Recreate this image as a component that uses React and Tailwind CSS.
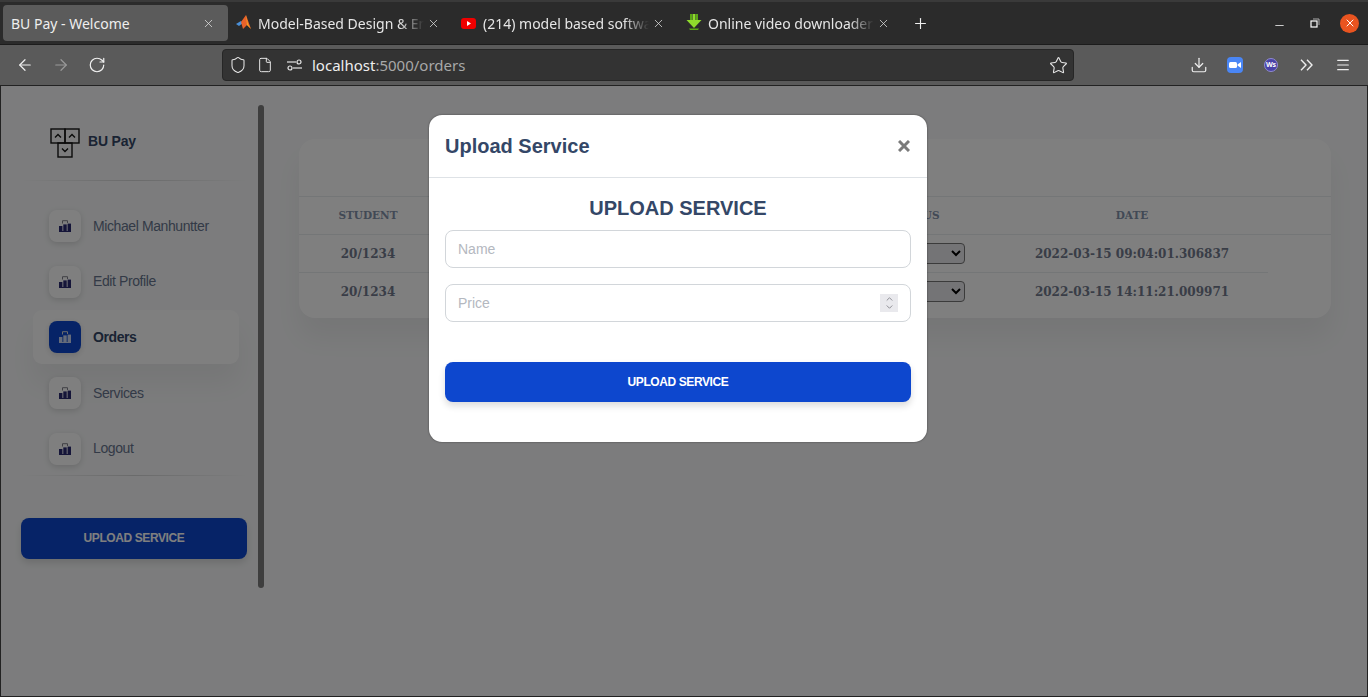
import React from "react";
import { ArrowLeft, ArrowRight, RotateCw, Shield, File, Star, Download, Menu, X, Plus, Minus, ChevronUp, ChevronDown } from "lucide-react";

const MatlabIcon = () => (
  <svg width="16" height="16" viewBox="0 0 16 16" className="shrink-0">
    <path d="M0 9 L5 6 L7 8 L3 11 Z" fill="#4a90d9" />
    <path d="M5 7 L10 0 L15 14 L11 10 L7 14 Z" fill="#e8622a" />
    <path d="M10 0 L12 9 L15 14 L11 10 Z" fill="#f5a623" />
  </svg>
);
const YouTubeIcon = () => (
  <svg width="15" height="15" viewBox="0 0 15 15" className="shrink-0">
    <rect x="0" y="2" width="15" height="11" rx="3" fill="#f00000" />
    <path d="M6 5 L10 7.5 L6 10 Z" fill="#fff" />
  </svg>
);
const ArrowFav = () => (
  <svg width="16" height="18" viewBox="0 0 16 18" className="shrink-0 -mt-[3px]">
    <path d="M4 1 H6 V7 H4 Z M10 1 H12 V7 H10 Z" fill="#5aa815" />
    <path d="M6.5 1 H9.5 V7 H6.5 Z" fill="#8fdc2c" />
    <path d="M0.5 7 H15.5 L8 15 Z" fill="#8fdc2c" />
    <path d="M3 15.5 H13 L12 17 H4 Z" fill="#5aa815" />
  </svg>
);

const Tab = ({ icon, label, active, fade }) => (
  <div className={`w-[225px] h-[36px] shrink-0 flex items-center rounded-[4px] pl-[8px] pr-[13px] ${active ? "bg-[#5b5b5b]" : ""}`}>
    {icon && <span className="w-[22px] shrink-0 flex items-center">{icon}</span>}
    <span className={`flex-1 overflow-hidden whitespace-nowrap text-[14px] pt-[1px] ${active ? "text-[#eeeeee]" : "text-[#e6e6e6]"} ${fade ? "[mask-image:linear-gradient(to_right,black_85%,transparent)]" : ""}`}>
      {label}
    </span>
    <X size={13} strokeWidth={1.4} className="shrink-0 ml-[3px] text-[#e0e0e0]" />
  </div>
);

const SlidersIcon = () => (
  <svg width="15" height="12" viewBox="0 0 15 12" fill="none" stroke="#e6e6e6" strokeWidth="1.2">
    <path d="M0 3 H9" />
    <circle cx="12" cy="3" r="2" />
    <circle cx="3" cy="9" r="2" />
    <path d="M6 9 H15" />
  </svg>
);

const Logo = () => (
  <svg width="30" height="30" viewBox="0 0 30 30" fill="none" stroke="#141414" strokeWidth="1.4" className="shrink-0">
    <rect x="1" y="1" width="14" height="14" />
    <rect x="15" y="1" width="14" height="14" />
    <rect x="8" y="15" width="14" height="14" />
    <path d="M5 9.5 L8 6.5 L11 9.5 M19 9.5 L22 6.5 L25 9.5 M12 20.5 L15 23.5 L18 20.5" />
  </svg>
);

const NavGlyph = ({ active }) => {
  const fill = active ? "#ffffff" : "#2a2a72";
  const op = active ? 0.78 : 1;
  return (
    <svg width="12" height="12" viewBox="0 0 12 12" fill="none">
      <path d="M3.5 3.5 V0.7 H8.5 V3" stroke={active ? "#d8d8d8" : "#80808c"} strokeWidth="1" />
      <g fill={fill} opacity={op}>
        <rect x="0" y="6" width="3.4" height="6" />
        <rect x="4.3" y="4.4" width="3.4" height="7.6" />
        <rect x="8.6" y="3.6" width="3.4" height="8.4" />
        <rect x="0" y="11" width="12" height="1" />
      </g>
    </svg>
  );
};

const NavItem = ({ label, active }) => (
  <div className={`h-[54px] flex items-center pl-[16px] rounded-[9px] ${active ? "bg-white shadow-[0_20px_27px_rgba(0,0,0,0.05)]" : ""}`}>
    <div className={`w-[32px] h-[32px] rounded-[8px] flex items-center justify-center shadow-[0_2px_6px_rgba(0,0,0,0.14)] ${active ? "bg-[#0d47ce]" : "bg-white"}`}>
      <NavGlyph active={active} />
    </div>
    <span className={`ml-[12px] text-[14px] tracking-[-0.4px] ${active ? "font-bold text-[#344767]" : "text-[#67748e]"}`}>{label}</span>
  </div>
);

const Divider = () => (
  <div className="h-px bg-[linear-gradient(to_right,transparent,rgba(0,0,0,0.14),transparent)]" />
);

const cols = "grid grid-cols-[138px_391px_168px_272px] items-center";

const Row = ({ date, line }) => (
  <div className="h-[38px] w-[969px]">
    <div className={`${cols} h-[37px] font-['DejaVu_Serif',serif] text-[12px] font-bold text-[#737b8e]`}>
      <div className="text-center">20/1234</div>
      <div />
      <div className="text-center">
        <select className="w-[106px] h-[21px] border border-[#767676] rounded-[4px] bg-[#e9e9ed] text-[13px] text-black align-middle">
          <option>Pending</option>
        </select>
      </div>
      <div className="text-center">{date}</div>
    </div>
    {line && <div className="h-px bg-[#e9ecef]" />}
  </div>
);

export default function App() {
  return (
    <div className="w-[1368px] h-[697px] flex flex-col overflow-hidden font-['Liberation_Sans',sans-serif]">
      {/* Tab strip */}
      <div className="h-[45px] shrink-0 bg-[#2b2b2b] border-t-2 border-t-[#3a3a3a] border-b border-b-[#1c1c1c] flex items-center pl-[3px] font-['Noto_Sans',sans-serif]">
        <Tab label="BU Pay - Welcome" active />
        <Tab icon={<MatlabIcon />} label="Model-Based Design & Engineering" fade />
        <Tab icon={<YouTubeIcon />} label="(214) model based software" fade />
        <Tab icon={<ArrowFav />} label="Online video downloader" fade />
        <Plus size={17} strokeWidth={1.6} className="ml-[9px] text-[#f0f0f0]" />
        <div className="flex-1" />
        <div className="flex items-center">
          <Minus size={13} strokeWidth={1.4} className="text-white mt-[4px]" />
          <svg width="10" height="10" viewBox="0 0 10 10" fill="none" className="ml-[24px]">
            <rect x="1" y="3" width="6" height="6" stroke="#fff" strokeWidth="1.2" />
            <path d="M3 1 H9 V7" stroke="#aaa" strokeWidth="1" />
          </svg>
          <div className="ml-[20px] mr-[9px] w-[19px] h-[19px] rounded-full bg-[#e95420] flex items-center justify-center">
            <X size={12} strokeWidth={2} className="text-white" />
          </div>
        </div>
      </div>

      {/* Toolbar */}
      <div className="h-[41px] shrink-0 bg-[#5a5a5a] border-b border-b-[#222222] flex items-center pl-[16px] pr-[17px] font-['Noto_Sans',sans-serif]">
        <ArrowLeft size={18} strokeWidth={1.6} className="text-[#f0f0f0]" />
        <ArrowRight size={18} strokeWidth={1.6} className="ml-[18px] text-[#9a9a9a]" />
        <RotateCw size={18} strokeWidth={1.6} className="ml-[18px] text-[#f0f0f0]" />
        <div className="ml-[116px] w-[852px] h-[32px] bg-[#333333] border border-[#262626] rounded-[4px] flex items-center pl-[6px] pr-[5px]">
          <Shield size={18} strokeWidth={1.4} className="text-[#e6e6e6]" />
          <File size={16} strokeWidth={1.5} className="ml-[10px] text-[#e6e6e6]" />
          <span className="ml-[14px] flex"><SlidersIcon /></span>
          <span className="ml-[10px] text-[15px] whitespace-nowrap text-[#eeeeee]">localhost<span className="text-[#a8a8a8]">:5000/orders</span></span>
          <div className="flex-1" />
          <Star size={19} strokeWidth={1.4} className="text-[#e6e6e6]" />
        </div>
        <div className="flex-1" />
        <Download size={18} strokeWidth={1.6} className="text-[#eeeeee]" />
        <div className="ml-[19px] w-[16px] h-[16px] rounded-[4px] bg-[#4a86f5] flex items-center justify-center">
          <svg width="12" height="8" viewBox="0 0 12 8"><rect x="0" y="1" width="8" height="6" rx="1.5" fill="#fff" /><path d="M8.5 3.5 L12 1 V7 L8.5 4.5 Z" fill="#fff" /></svg>
        </div>
        <div className="ml-[21px] w-[14px] h-[14px] rounded-full bg-[#4a42a8] border border-[#8f8bd0] flex items-center justify-center text-[7px] font-bold text-white">Ws</div>
        <svg width="13" height="12" viewBox="0 0 13 12" fill="none" stroke="#eeeeee" strokeWidth="1.4" className="ml-[22px]">
          <path d="M1 0.7 L6 6 L1 11.3 M7 0.7 L12 6 L7 11.3" />
        </svg>
        <Menu size={16} strokeWidth={1.7} className="ml-[22px] text-[#eeeeee]" />
      </div>

      {/* Page */}
      <div className="relative flex-1 flex items-start bg-[#f8f9fa] border-x border-b border-[#222222]">
        <aside className="ml-[20px] w-[226px] shrink-0 pt-[42px]">
          <div className="flex items-center ml-[29px] h-[29px]">
            <Logo />
            <span className="ml-[8px] pb-[2px] text-[14px] font-bold tracking-[-0.2px] text-[#344767]">BU Pay</span>
          </div>
          <div className="mt-[23px] mb-[18px]"><Divider /></div>
          <nav className="ml-[12px] w-[206px] flex flex-col gap-[1.7px]">
            <NavItem label="Michael Manhuntter" />
            <NavItem label="Edit Profile" />
            <NavItem label="Orders" active />
            <NavItem label="Services" />
            <NavItem label="Logout" />
          </nav>
          <div className="-mt-px mb-[42px]"><Divider /></div>
          <button className="w-[226px] h-[41px] rounded-[8px] bg-[#0d47ce] text-white text-[12px] font-bold tracking-[-0.4px] shadow-[0_4px_7px_rgba(0,0,0,0.12)]">UPLOAD SERVICE</button>
        </aside>

        <div className="ml-[11px] mt-[19px] w-[6px] h-[483px] rounded-full bg-[#7c7c7c] shrink-0" />

        <section className="ml-[35px] mt-[53px] w-[1032px] h-[179px] rounded-[16px] bg-white shadow-[0_20px_27px_rgba(0,0,0,0.05)] overflow-hidden">
          <div className="h-[57px]" />
          <div className="border-y border-[#e9ecef] h-[39px]">
            <div className={`${cols} h-full font-['DejaVu_Serif',serif] text-[10.5px] font-bold text-[#8392ab]`}>
              <div className="text-center">STUDENT</div>
              <div />
              <div className="text-center pl-[8px]">STATUS</div>
              <div className="text-center">DATE</div>
            </div>
          </div>
          <Row date="2022-03-15 09:04:01.306837" line />
          <Row date="2022-03-15 14:11:21.009971" />
        </section>

        {/* Modal backdrop */}
        <div className="absolute inset-0 bg-black/50">
          <div className="absolute left-[428px] top-[29px] w-[498px] h-[327px] bg-white rounded-[13px] shadow-[0_0_2px_rgba(0,0,0,0.5)]">
            <div className="h-[63px] border-b border-[#dee2e6] flex items-center justify-between pl-[16px] pr-[17px]">
              <h5 className="text-[20px] font-bold text-[#344767]">Upload Service</h5>
              <svg width="12" height="12" viewBox="0 0 12 12" stroke="#7b7b7b" strokeWidth="3"><path d="M1 1 L11 11 M11 1 L1 11" /></svg>
            </div>
            <div className="px-[16px]">
              <h3 className="h-[52px] pt-[18px] leading-[24px] text-center text-[20px] font-bold text-[#344767]">UPLOAD SERVICE</h3>
              <input placeholder="Name" className="block w-full h-[38px] rounded-[8px] border border-[#d2d6da] px-[12px] text-[14px] outline-none placeholder:text-[#b4b8c0]" />
              <div className="mt-[16px] h-[38px] rounded-[8px] border border-[#d2d6da] flex items-center pl-[12px] pr-[12px]">
                <input placeholder="Price" className="flex-1 text-[14px] outline-none placeholder:text-[#b4b8c0]" />
                <div className="w-[18px] h-[18px] bg-[#e9e9ed] flex flex-col items-center justify-center text-[#6f6f78]">
                  <ChevronUp size={11} strokeWidth={1.8} className="-mb-[1px]" />
                  <ChevronDown size={11} strokeWidth={1.8} className="-mt-[1px]" />
                </div>
              </div>
              <button className="mt-[40px] w-full h-[40px] rounded-[8px] bg-[#0d47ce] text-white text-[12px] font-bold tracking-[-0.4px] shadow-[0_4px_7px_rgba(0,0,0,0.14)]">UPLOAD SERVICE</button>
            </div>
          </div>
        </div>
      </div>
    </div>
  );
}
